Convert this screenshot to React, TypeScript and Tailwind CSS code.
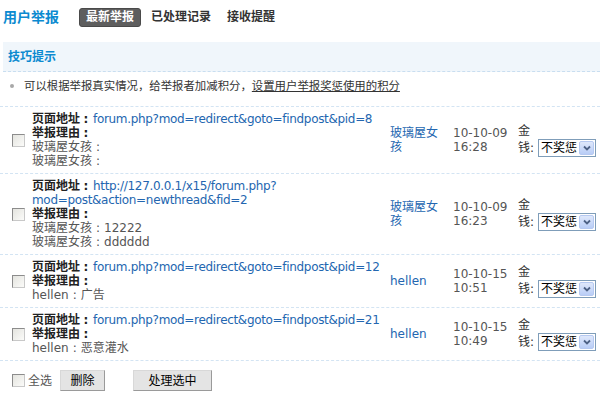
import React from "react";

const FONT = '"DejaVu Sans", "Noto Sans CJK SC", sans-serif';

function Colon() {
  return <span className="inline-block w-[12px] text-center">:</span>;
}

function Checkbox() {
  return (
    <div className="w-[13px] h-[13px] border border-[#8c8c8c] border-r-[#c8c8c8] border-b-[#c8c8c8] bg-gradient-to-br from-[#e4e4df] to-[#fbfbf9] shrink-0" />
  );
}

function Select() {
  return (
    <div className="w-[58px] h-[18px] border border-[#7f9db9] bg-white flex items-center justify-between pl-[2px] pr-[1px]">
      <span className="text-[12px] leading-[14px] text-[#000]">不奖惩</span>
      <div className="w-[15px] h-[14px] rounded-[2px] bg-gradient-to-b from-[#dfe8fb] to-[#b9cdf6] border border-[#b6c9f1] flex items-center justify-center">
        <svg width="8" height="6" viewBox="0 0 8 6">
          <path d="M1 1.5 L4 4.5 L7 1.5" stroke="#4d6185" strokeWidth="1.8" fill="none" />
        </svg>
      </div>
    </div>
  );
}

type Row = {
  url: React.ReactNode;
  reasons: [string, string][];
  name: string;
  date: string;
  time: string;
};

const rows: Row[] = [
  {
    url: "forum.php?mod=redirect&goto=findpost&pid=8",
    reasons: [
      ["玻璃屋女孩", ""],
      ["玻璃屋女孩", ""],
    ],
    name: "玻璃屋女孩",
    date: "10-10-09",
    time: "16:28",
  },
  {
    url: (
      <>
        http://127.0.0.1/x15/forum.php?
        <br />
        mod=post&action=newthread&fid=2
      </>
    ),
    reasons: [
      ["玻璃屋女孩", "12222"],
      ["玻璃屋女孩", "dddddd"],
    ],
    name: "玻璃屋女孩",
    date: "10-10-09",
    time: "16:23",
  },
  {
    url: "forum.php?mod=redirect&goto=findpost&pid=12",
    reasons: [["hellen", "广告"]],
    name: "hellen",
    date: "10-10-15",
    time: "10:51",
  },
  {
    url: "forum.php?mod=redirect&goto=findpost&pid=21",
    reasons: [["hellen", "恶意灌水"]],
    name: "hellen",
    date: "10-10-15",
    time: "10:49",
  },
];

export default function App() {
  return (
    <div
      className="w-[600px] h-[401px] bg-white overflow-hidden text-[12px] text-[#333]"
      style={{ fontFamily: FONT }}
    >
      {/* header */}
      <div className="flex items-center pt-[8px] pl-[3px] h-[27px]">
        <span className="text-[14px] font-bold text-[#0b8ad0] leading-[19px]">用户举报</span>
        <span className="ml-[20px] h-[19px] px-[6px] rounded-[3px] bg-[#5e5e5e] border border-[#4a4a4a] text-white font-bold leading-[17px]">
          最新举报
        </span>
        <span className="ml-[10px] font-bold text-[#333] leading-[19px]">已处理记录</span>
        <span className="ml-[16px] font-bold text-[#333] leading-[19px]">接收提醒</span>
      </div>

      {/* tips */}
      <div className="mt-[15px] ml-[3px] h-[30px] bg-[#f0f6fb] border-b border-dashed border-[#c9def0] flex items-center pl-[5px]">
        <span className="font-bold text-[#0b8ad0] leading-[14px]">技巧提示</span>
      </div>
      <div className="mt-[7px] flex items-center pl-[10px] h-[14px]">
        <span className="w-[4px] h-[4px] rounded-full bg-[#a8a8a8]" />
        <span className="ml-[10px] leading-[14px] text-[#333] text-[11.4px]">
          可以根据举报真实情况，给举报者加减积分，
          <span className="underline">设置用户举报奖惩使用的积分</span>
        </span>
      </div>

      {/* rows */}
      <div className="mt-[13px] border-t border-dashed border-[#d3e4f3]">
        {rows.map((r, i) => (
          <div
            key={i}
            className="grid grid-cols-[32px_358px_63px_65px_82px] items-center border-b border-dashed border-[#d3e4f3] py-[5px]"
          >
            <div className="pl-[12px]">
              <Checkbox />
            </div>
            <div className="leading-[14px]">
              <div>
                <span className="font-bold text-[#222]">
                  页面地址<Colon />
                </span>
                <span className="text-[#2366b0] tracking-[-0.32px] pl-[1px]">{r.url}</span>
              </div>
              <div className="font-bold text-[#222]">
                举报理由<Colon />
              </div>
              {r.reasons.map(([who, what], j) => (
                <div key={j} className="text-[#555]">
                  {who}
                  <Colon />
                  {what}
                </div>
              ))}
            </div>
            <div className="w-[56px] text-[#2366b0] leading-[14px] break-all">{r.name}</div>
            <div className="leading-[14px] text-[#555]">
              <div>{r.date}</div>
              <div>{r.time}</div>
            </div>
            <div className="text-[#333] leading-[16px]">
              <div>金</div>
              <div className="flex items-center">
                <span className="w-[20px]">钱:</span>
                <Select />
              </div>
            </div>
          </div>
        ))}
      </div>

      {/* bottom */}
      <div className="mt-[9px] flex items-center h-[21px] pl-[12px]">
        <Checkbox />
        <span className="ml-[3px] text-[#555] leading-[14px]">全选</span>
        <button className="ml-[8px] w-[45px] h-[21px] bg-[#e4e4e4] border border-[#d8d8d8] border-r-[#9a9a9a] border-b-[#9a9a9a] text-[12px] text-black leading-[14px]">
          删除
        </button>
        <button className="ml-[28px] w-[79px] h-[21px] bg-[#e4e4e4] border border-[#d8d8d8] border-r-[#9a9a9a] border-b-[#9a9a9a] text-[12px] text-black leading-[14px]">
          处理选中
        </button>
      </div>
    </div>
  );
}
